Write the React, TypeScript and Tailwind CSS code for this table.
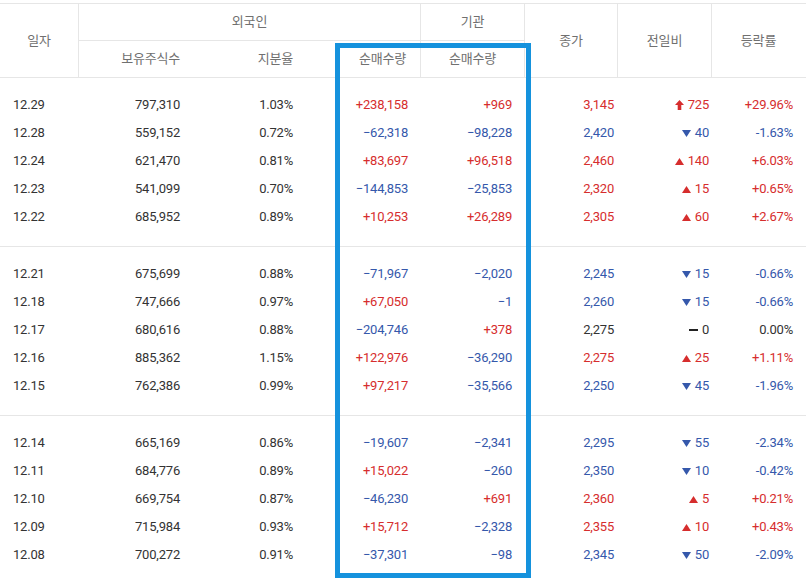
import React from "react";

type Dir = "upper" | "up" | "down" | "flat";

type Row = {
  date: string;
  shares: string;
  ratio: string;
  foreign: string;
  inst: string;
  close: string;
  dir: Dir;
  diff: string;
  rate: string;
};

const groups: Row[][] = [
  [
    { date: "12.29", shares: "797,310", ratio: "1.03%", foreign: "+238,158", inst: "+969", close: "3,145", dir: "upper", diff: "725", rate: "+29.96%" },
    { date: "12.28", shares: "559,152", ratio: "0.72%", foreign: "−62,318", inst: "−98,228", close: "2,420", dir: "down", diff: "40", rate: "-1.63%" },
    { date: "12.24", shares: "621,470", ratio: "0.81%", foreign: "+83,697", inst: "+96,518", close: "2,460", dir: "up", diff: "140", rate: "+6.03%" },
    { date: "12.23", shares: "541,099", ratio: "0.70%", foreign: "−144,853", inst: "−25,853", close: "2,320", dir: "up", diff: "15", rate: "+0.65%" },
    { date: "12.22", shares: "685,952", ratio: "0.89%", foreign: "+10,253", inst: "+26,289", close: "2,305", dir: "up", diff: "60", rate: "+2.67%" },
  ],
  [
    { date: "12.21", shares: "675,699", ratio: "0.88%", foreign: "−71,967", inst: "−2,020", close: "2,245", dir: "down", diff: "15", rate: "-0.66%" },
    { date: "12.18", shares: "747,666", ratio: "0.97%", foreign: "+67,050", inst: "−1", close: "2,260", dir: "down", diff: "15", rate: "-0.66%" },
    { date: "12.17", shares: "680,616", ratio: "0.88%", foreign: "−204,746", inst: "+378", close: "2,275", dir: "flat", diff: "0", rate: "0.00%" },
    { date: "12.16", shares: "885,362", ratio: "1.15%", foreign: "+122,976", inst: "−36,290", close: "2,275", dir: "up", diff: "25", rate: "+1.11%" },
    { date: "12.15", shares: "762,386", ratio: "0.99%", foreign: "+97,217", inst: "−35,566", close: "2,250", dir: "down", diff: "45", rate: "-1.96%" },
  ],
  [
    { date: "12.14", shares: "665,169", ratio: "0.86%", foreign: "−19,607", inst: "−2,341", close: "2,295", dir: "down", diff: "55", rate: "-2.34%" },
    { date: "12.11", shares: "684,776", ratio: "0.89%", foreign: "+15,022", inst: "−260", close: "2,350", dir: "down", diff: "10", rate: "-0.42%" },
    { date: "12.10", shares: "669,754", ratio: "0.87%", foreign: "−46,230", inst: "+691", close: "2,360", dir: "up", diff: "5", rate: "+0.21%" },
    { date: "12.09", shares: "715,984", ratio: "0.93%", foreign: "+15,712", inst: "−2,328", close: "2,355", dir: "up", diff: "10", rate: "+0.43%" },
    { date: "12.08", shares: "700,272", ratio: "0.91%", foreign: "−37,301", inst: "−98", close: "2,345", dir: "down", diff: "50", rate: "-2.09%" },
  ],
];

const cols = "grid grid-cols-[79px_114px_113px_115px_104px_93px_94px_93px]";

const signColor = (v: string) =>
  v.startsWith("+") ? "text-[#d62d2d]" : v.startsWith("−") || v.startsWith("-") ? "text-[#3558ab]" : "text-[#333]";

const dirColor = (d: Dir) =>
  d === "upper" || d === "up" ? "text-[#d62d2d]" : d === "down" ? "text-[#3558ab]" : "text-[#333]";

function DirIcon({ dir }: { dir: Dir }) {
  if (dir === "upper")
    return (
      <svg width="9" height="10" viewBox="0 0 10 11" className="fill-current">
        <polygon points="5,0 10,5.5 7,5.5 7,11 3,11 3,5.5 0,5.5" />
      </svg>
    );
  if (dir === "up")
    return (
      <svg width="9" height="7" viewBox="0 0 9 7" className="fill-current">
        <polygon points="0,7 9,7 4.5,0" />
      </svg>
    );
  if (dir === "down")
    return (
      <svg width="9" height="7" viewBox="0 0 9 7" className="fill-current">
        <polygon points="0,0 9,0 4.5,7" />
      </svg>
    );
  return <span className="block w-[9px] h-[2px] bg-[#222]" />;
}

export default function App() {
  return (
    <div
      className="min-h-screen bg-white pt-[3px] text-[13px] text-[#333] tracking-[-0.2px]"
      style={{ fontFamily: "Roboto, 'Noto Sans CJK KR', sans-serif" }}
    >
      <div className="relative w-[806px]">
        {/* Header */}
        <div className={`${cols} grid-rows-[37px_36px] border-y border-[#e6e6e6] text-[#707070]`}>
          <div className="row-span-2 flex items-center justify-center border-r border-[#e6e6e6]">일자</div>
          <div className="col-span-3 flex items-center justify-center border-r border-b border-[#e6e6e6]">외국인</div>
          <div className="flex items-center justify-center border-r border-b border-[#e6e6e6]">기관</div>
          <div className="row-span-2 flex items-center justify-center border-r border-[#e6e6e6]">종가</div>
          <div className="row-span-2 flex items-center justify-center border-r border-[#e6e6e6]">전일비</div>
          <div className="row-span-2 flex items-center justify-center">등락률</div>
          <div className="flex items-center justify-end pr-[13px]">보유주식수</div>
          <div className="flex items-center justify-end pr-[13px]">지분율</div>
          <div className="flex items-center justify-end pr-[14px] border-r border-[#e6e6e6]">순매수량</div>
          <div className="flex items-center justify-center border-r border-[#e6e6e6]">순매수량</div>
        </div>

        {/* Body */}
        {groups.map((rows, gi) => (
          <div key={gi} className="pt-[13px] pb-[15px] border-b border-[#e6e6e6]">
            {rows.map((r) => (
              <div key={r.date} className={`${cols} h-[28px] items-center`}>
                <div className="pl-[13px]">{r.date}</div>
                <div className="text-right pr-[13px]">{r.shares}</div>
                <div className="text-right pr-[13px]">{r.ratio}</div>
                <div className={`text-right pr-[13px] ${signColor(r.foreign)}`}>{r.foreign}</div>
                <div className={`text-right pr-[13px] ${signColor(r.inst)}`}>{r.inst}</div>
                <div className={`text-right pr-[4px] ${dirColor(r.dir)}`}>{r.close}</div>
                <div className={`flex items-center justify-end gap-[4px] pr-[3px] ${dirColor(r.dir)}`}>
                  <DirIcon dir={r.dir} />
                  <span>{r.diff}</span>
                </div>
                <div className={`text-right pr-[12px] ${signColor(r.rate)}`}>{r.rate}</div>
              </div>
            ))}
          </div>
        ))}

        {/* highlight box */}
        <div className="absolute left-[335px] top-[40px] w-[196px] h-[535px] border-[5px] border-[#1592dd] pointer-events-none" />
      </div>
    </div>
  );
}
